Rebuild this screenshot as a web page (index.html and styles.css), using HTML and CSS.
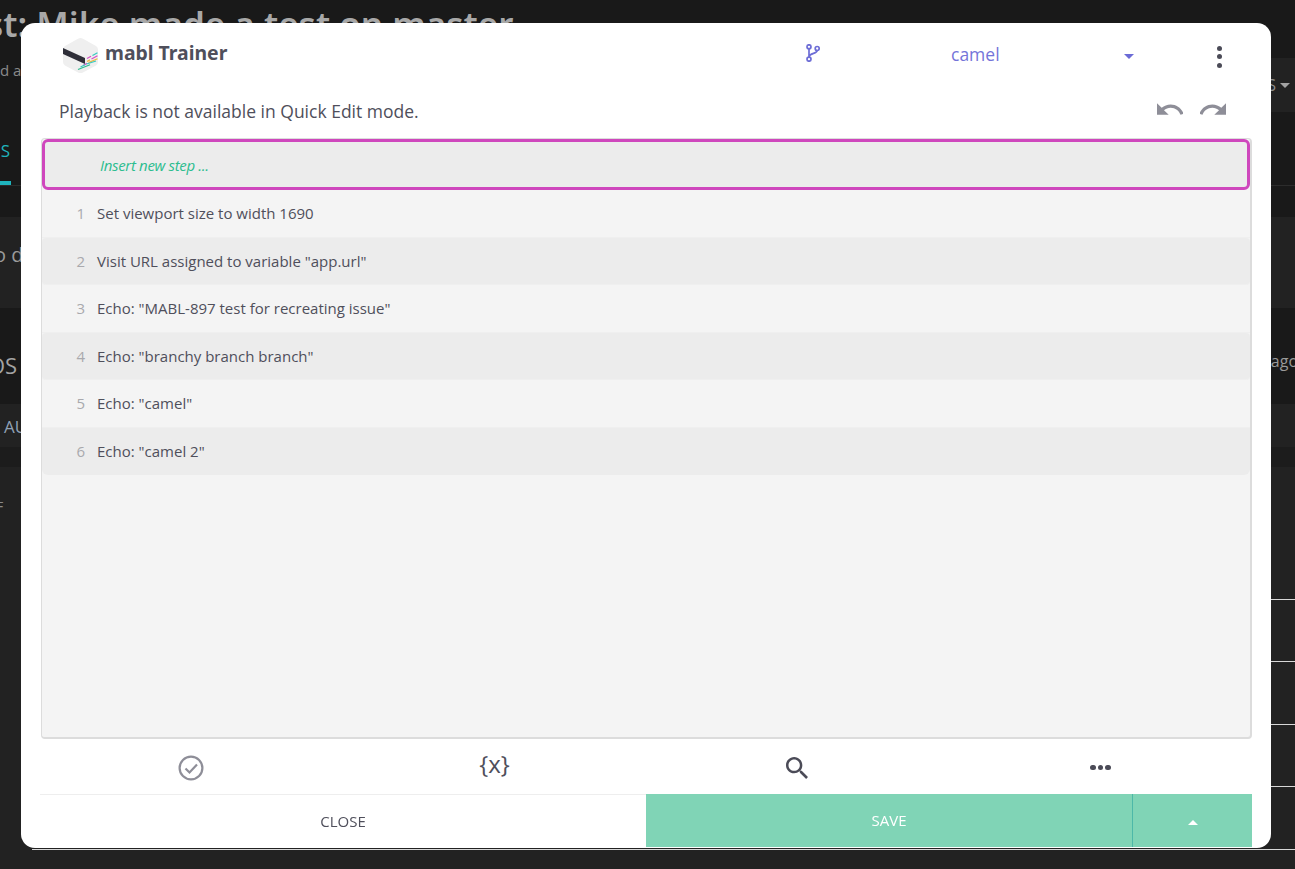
FILE: index.html
```html
<!DOCTYPE html>
<html lang="en">
<head>
<meta charset="utf-8">
<title>mabl Trainer</title>
<link rel="stylesheet" href="styles.css">
</head>
<body>
<div class="page">
  <header class="bg-head">
    <div class="bg-title-col">
      <h1 class="bg-title">st: Mike made a test on master</h1>
      <p class="bg-sub">d a</p>
    </div>
    <div class="bg-action"><span>S</span><i class="bg-caret"></i></div>
  </header>
  <nav class="bg-tabs"><span class="bg-tab">S</span></nav>
  <section class="bg-panel"><p class="bg-panel-text">o da</p></section>
  <section class="bg-runs"><span class="bg-runs-title">OS</span><span class="bg-ago">ago</span></section>
  <section class="bg-filter"><span>AU</span></section>
  <div class="bg-gap"></div>
  <section class="bg-table">
    <div class="bg-table-head"><span>F</span></div>
    <div class="bg-row"></div>
    <div class="bg-row"></div>
    <div class="bg-row"></div>
    <div class="bg-row"></div>
    <div class="bg-row"></div>
  </section>
</div>

<div class="modal">
  <div class="modal-head">
    <div class="brand">
      <svg class="logo" viewBox="0 0 35 35" aria-hidden="true">
        <path d="M15 .8 a5 5 0 0 1 5 0 L33 8 a4 4 0 0 1 2 3.5 V24 a4 4 0 0 1-2 3.4 L20 34.5 a5 5 0 0 1-5 0 L2 27.4 a4 4 0 0 1-2-3.4 V11.5 a4 4 0 0 1 2-3.5z" fill="#efefef"/>
        <path d="M0 10 L22 20 V26 L0 16z" fill="#2e2e38"/>
        <g stroke-width="1.2" fill="none">
          <path d="M24 20.5 L28 18.3" stroke="#d44fc4"/>
          <path d="M29.5 17.5 L34.5 14.8" stroke="#35c9c0"/>
          <path d="M24 23.5 L27 21.9" stroke="#f3b63f"/>
          <path d="M28.5 21 L34.5 17.8" stroke="#d44fc4"/>
          <path d="M20 27.5 L24 25.4" stroke="#d44fc4"/>
          <path d="M25.5 24.6 L34.5 20.8" stroke="#f3b63f"/>
          <path d="M17.5 29 L22 26.8" stroke="#35c9c0"/>
          <path d="M23.5 26 L33 23" stroke="#35c9c0"/>
          <path d="M15 31.5 L27 26.8" stroke="#2dbd8f"/>
        </g>
      </svg>
      <span class="brand-name">mabl Trainer</span>
    </div>
    <svg class="branch-icon" viewBox="0 0 14 18" aria-hidden="true">
      <g fill="none" stroke="#6d6dd6" stroke-width="1.7">
        <circle cx="3" cy="2.8" r="2"/>
        <circle cx="3" cy="15.2" r="2"/>
        <circle cx="11.2" cy="4.5" r="2"/>
        <path d="M3 4.8 V13.2 M11.2 6.5 C11.2 10 3.6 8.8 3 13"/>
      </g>
    </svg>
    <div class="branch-select">
      <span class="branch-name">camel</span>
      <i class="branch-caret"></i>
    </div>
    <div class="kebab"><i></i><i></i><i></i></div>
  </div>

  <div class="modal-msg">
    <span>Playback is not available in Quick Edit mode.</span>
    <div class="history">
      <svg class="history-icon" viewBox="2 7 20 9" aria-hidden="true"><path d="M12.5 8c-2.65 0-5.05.99-6.9 2.6L2 7v9h9l-3.62-3.62c1.39-1.16 3.16-1.88 5.12-1.88 3.54 0 6.55 2.31 7.6 5.5l2.37-.78C21.08 11.03 17.15 8 12.5 8z"/></svg>
      <svg class="history-icon" viewBox="2 7 20 9" aria-hidden="true"><path d="M18.4 10.6C16.55 8.99 14.15 8 11.5 8c-4.65 0-8.58 3.03-9.96 7.22L3.9 16c1.05-3.19 4.05-5.5 7.6-5.5 1.95 0 3.73.72 5.12 1.88L13 16h9V7l-3.6 3.6z"/></svg>
    </div>
  </div>

  <div class="steps">
    <div class="insert-step">Insert new step ...</div>
    <ol class="step-list">
      <li class="step"><span class="step-num">1</span>Set viewport size to width 1690</li>
      <li class="step"><span class="step-num">2</span>Visit URL assigned to variable "app.url"</li>
      <li class="step"><span class="step-num">3</span>Echo: "MABL-897 test for recreating issue"</li>
      <li class="step"><span class="step-num">4</span>Echo: "branchy branch branch"</li>
      <li class="step"><span class="step-num">5</span>Echo: "camel"</li>
      <li class="step"><span class="step-num">6</span>Echo: "camel 2"</li>
    </ol>
  </div>

  <div class="toolbar">
    <div class="tool">
      <svg class="tool-check" viewBox="0 0 26 26" aria-hidden="true">
        <circle cx="13" cy="13" r="11.4" fill="none" stroke="#8e8e98" stroke-width="2.2"/>
        <path d="M7.5 13.5 L11.5 17.5 L19 9.5" fill="none" stroke="#8e8e98" stroke-width="2.2"/>
      </svg>
    </div>
    <div class="tool tool-var">{x}</div>
    <div class="tool">
      <svg class="tool-search" viewBox="3 3 17.5 17.5" aria-hidden="true"><path d="M15.5 14h-.79l-.28-.27C15.41 12.59 16 11.11 16 9.5 16 5.91 13.09 3 9.5 3S3 5.91 3 9.5 5.91 16 9.5 16c1.61 0 3.09-.59 4.23-1.57l.27.28v.79l5 4.99L20.49 19l-4.99-5zm-6 0C7.01 14 5 11.99 5 9.5S7.01 5 9.5 5 14 7.01 14 9.5 11.99 14 9.5 14z"/></svg>
    </div>
    <div class="tool tool-dots"><i></i><i></i><i></i></div>
  </div>

  <div class="modal-foot">
    <button class="btn-close" type="button">Close</button>
    <div class="save-group">
      <button class="btn-save" type="button">Save</button>
      <button class="btn-more" type="button" aria-label="More"><i></i></button>
    </div>
  </div>
</div>
</body>
</html>
```
FILE: styles.css
```css
* { box-sizing: border-box; }
html, body { margin: 0; height: 100%; overflow: hidden; }
body { font-family: "Open Sans", "Liberation Sans", sans-serif; background: #222; }

/* dimmed page behind the dialog */
.page { height: 869px; display: flex; flex-direction: column; background: #191919; color: #a3a3a3; overflow: hidden; }
.bg-head { height: 138px; flex: none; display: flex; justify-content: space-between; align-items: flex-start; }
.bg-title-col { margin-left: -14px; white-space: nowrap; }
.bg-title { margin: 0; padding-top: 3px; font: 600 35px/42px "Noto Sans", sans-serif; color: #a8a8a8; }
.bg-sub { margin: 15px 0 0 14px; font-size: 15px; line-height: 20px; color: #8a8a8a; }
.bg-action { margin-top: 58px; height: 54px; width: 120px; background: #222; color: #8f8f8f; display: flex; align-items: center; justify-content: flex-end; gap: 4px; padding-right: 5px; font-size: 16px; }
.bg-caret { width: 0; height: 0; border-left: 5px solid transparent; border-right: 5px solid transparent; border-top: 5px solid #a3a3a3; }
.bg-tabs { height: 48px; flex: none; border-bottom: 1px solid #2c2c2c; }
.bg-tab { display: block; width: 11px; height: 47px; border-bottom: 4px solid #1fb4bd; color: #1fb4bd; font-size: 17px; line-height: 26px; direction: rtl; overflow: hidden; padding-right: 1px; }
.bg-panel { margin-top: 31px; height: 91px; flex: none; background: #222; }
.bg-panel-text { margin: 0 0 0 -6px; padding-top: 25px; font-size: 20px; line-height: 26px; color: #9a9a9a; }
.bg-runs { height: 96px; flex: none; display: flex; justify-content: space-between; align-items: flex-start; }
.bg-runs-title { margin-left: -12px; margin-top: 44px; font-size: 22px; line-height: 26px; color: #a3a3a3; }
.bg-ago { margin-top: 42px; font-size: 16px; line-height: 22px; color: #9a9a9a; margin-right: -3px; }
.bg-filter { height: 43px; flex: none; background: #222; padding-left: 4px; font-size: 17px; line-height: 46px; color: #8fa0b5; }
.bg-gap { height: 20px; flex: none; background: #1c1c1c; }
.bg-table { flex: 1; background: #222; padding-left: 32px; }
.bg-table-head { height: 70px; margin-left: -32px; color: #8a8a8a; font-size: 14px; line-height: 80px; text-indent: -4px; }
.bg-row { height: 62.6px; border-bottom: 1px solid #d8d8d8; }

/* dialog */
.modal { position: fixed; left: 21px; top: 23px; width: 1250px; height: 825px; background: #fff; border-radius: 14px; display: flex; flex-direction: column; padding: 0 19px 1px; color: #4f4f5b; }
.modal-head { height: 64px; flex: none; display: flex; align-items: center; }
.brand { display: flex; align-items: center; gap: 7px; margin-left: 23px; width: 743px; }
.logo { width: 35px; height: 35px; flex: none; }
.brand-name { font: 700 19.4px/26px "Noto Sans", sans-serif; margin-top: -4px; }
.branch-icon { width: 14px; height: 18px; flex: none; margin-top: -5px; }
.branch-select { width: 314px; height: 30px; margin-top: -2px; display: flex; align-items: center; justify-content: space-between; padding-left: 131px; color: #7474d9; font-size: 17.5px; }
.branch-caret { width: 0; height: 0; border-left: 5px solid transparent; border-right: 5px solid transparent; border-top: 5px solid #6b6bd6; margin-top: 4px; }
.kebab { margin-left: 83px; display: flex; flex-direction: column; gap: 3.5px; margin-top: 3px; }
.kebab i { display: block; width: 5px; height: 5px; border-radius: 50%; background: #4b4b57; }
.modal-msg { height: 51px; flex: none; display: flex; align-items: center; justify-content: space-between; padding: 0 0 4px 19px; font-size: 17.5px; }
.history { display: flex; gap: 17px; margin-right: 26px; margin-top: -4px; }
.history-icon { width: 26px; height: 12px; fill: #8e8e98; display: block; }

.steps { height: 601px; flex: none; margin-left: 1px; background: #f4f4f4; border: 1px solid #dcdcdc; border-width: 1px 2px 2px 1px; border-radius: 4px; }
.insert-step { height: 51px; background: #ececec; border: 3px solid #cf47bd; border-radius: 6px; padding-left: 55px; font-size: 15px; font-style: italic; line-height: 46px; color: #2dbd8f; letter-spacing: -.33px; }
.step-list { list-style: none; margin: 0; padding: 0; font-size: 15px; }
.step { height: 47.5px; display: flex; align-items: center; border-bottom: 1px solid #efefef; }
.step:nth-child(even) { background: #ececec; border-radius: 4px; }
.step:last-child { border-radius: 0 0 6px 6px; border-bottom: 0; }
.step-num { width: 55px; text-align: right; padding-right: 12px; color: #a9a9ad; flex: none; }

.toolbar { height: 55px; flex: none; padding-top: 2px; display: grid; grid-template-columns: repeat(4, 1fr); align-items: center; }
.tool { display: flex; align-items: center; justify-content: center; }
.tool-check { width: 26px; height: 26px; margin-right: 2px; }
.tool-var { font-size: 24px; line-height: 26px; margin-top: -7px; }
.tool-search { width: 22px; height: 22px; margin-right: 2px; fill: #4b4b57; }
.tool-dots { gap: 2px; }
.tool-dots i { width: 5.5px; height: 5.5px; border-radius: 50%; background: #4b4b57; display: block; }

.modal-foot { flex: 1; display: flex; border-top: 1px solid #eee; }
.btn-close { flex: 1; border: 0; background: none; font: 15px "Open Sans", sans-serif; color: #4f4f5b; text-transform: uppercase; padding: 0 0 1px; }
.save-group { width: 606px; display: flex; margin-top: -1px; background: #80d4b6; }
.btn-save { flex: 1; border: 0; background: none; border-right: 1px solid #4db8a8; color: #fff; font: 15px "Open Sans", sans-serif; text-transform: uppercase; padding: 0 0 2px; }
.btn-more { width: 119px; border: 0; background: none; display: flex; align-items: center; justify-content: center; padding: 3px 0 0; }
.btn-more i { width: 0; height: 0; border-left: 5.5px solid transparent; border-right: 5.5px solid transparent; border-bottom: 5px solid #fff; }
```
